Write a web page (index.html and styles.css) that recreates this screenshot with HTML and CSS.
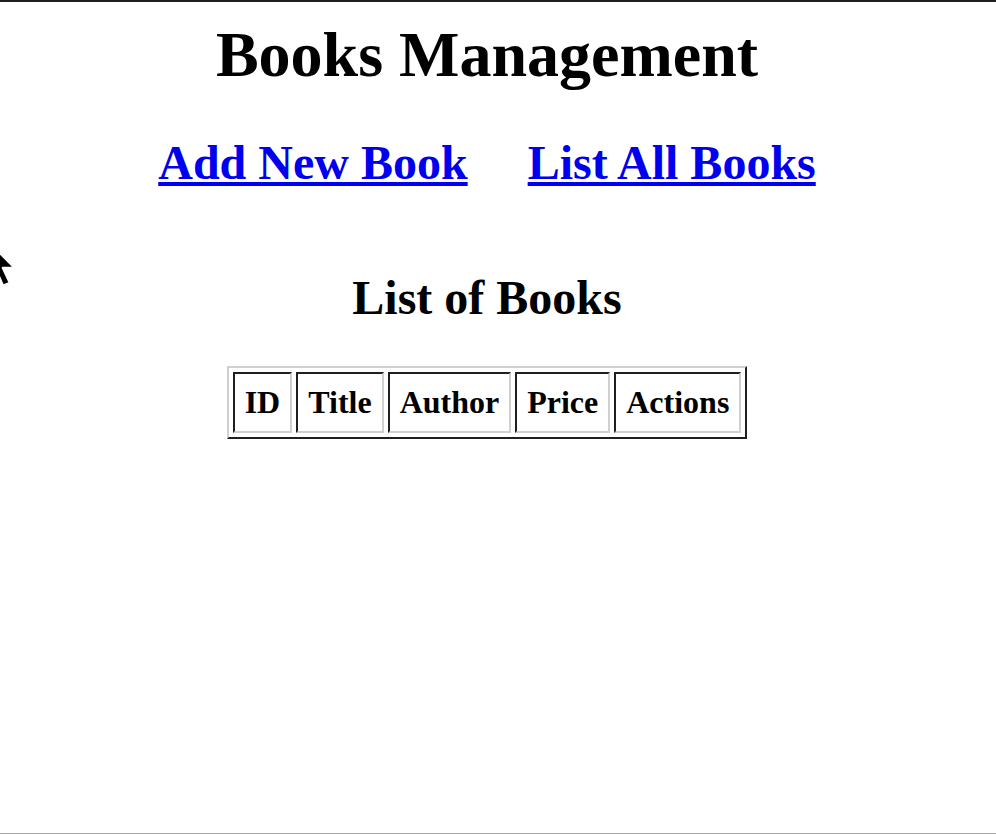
FILE: index.html
```html
<!DOCTYPE html>
<html>
<head>
<meta charset="utf-8">
<title>Books Management</title>
<link rel="stylesheet" href="styles.css">
</head>
<body class="page">
  <div class="content">
    <h1 class="title">Books Management</h1>
    <h2 class="nav">
      <a href="#" class="nav-link">Add New Book</a> &nbsp;&nbsp;&nbsp; <a href="#" class="nav-link">List All Books</a>
    </h2>
    <div class="table-wrap">
      <table class="books">
        <caption class="books-caption"><h2 class="caption-title">List of Books</h2></caption>
        <tr>
          <th>ID</th>
          <th>Title</th>
          <th>Author</th>
          <th>Price</th>
          <th>Actions</th>
        </tr>
      </table>
    </div>
  </div>
  <svg class="cursor" width="40" height="56" viewBox="0 0 40 56" aria-hidden="true">
    <polygon points="2,2 2,40 11,32 18,48 25,45 18,30 30,30" fill="#000" stroke="#fff" stroke-width="2.5" stroke-linejoin="round"/>
  </svg>
</body>
</html>
```

FILE: styles.css
```css
html {
  height: 100%;
}

.page {
  margin: 0;
  min-height: 100vh;
  box-sizing: border-box;
  border-top: 2px solid #1f1f1f;
  border-bottom: 1px solid #a8a8a8;
  background: #fff;
  color: #000;
  font-family: "Liberation Serif", "Times New Roman", serif;
  font-size: 32px;
  position: relative;
  overflow: hidden;
}

.content {
  padding: 0 22px 0 0;
  text-align: center;
}

.title {
  font-size: 64px;
  font-weight: bold;
  margin: 16px 0 43px;
}

.nav {
  font-size: 48px;
  font-weight: bold;
  margin: 0 0 40px;
}

.nav-link {
  color: #0000ee;
  text-decoration: underline;
}

.table-wrap {
  display: flex;
  justify-content: center;
}

.books {
  border: 2px solid;
  border-color: #d0d0d0 #1f1f1f #1f1f1f #d0d0d0;
  border-spacing: 4px;
}

.books-caption {
  caption-side: top;
}

.caption-title {
  font-size: 48px;
  font-weight: bold;
  margin: 40px 0 41px;
}

.books th {
  font-size: 32px;
  font-weight: bold;
  padding: 10px;
  border: 2px solid;
  border-color: #1f1f1f #d0d0d0 #d0d0d0 #1f1f1f;
}

.cursor {
  position: absolute;
  left: -15px;
  top: 236px;
}
```
